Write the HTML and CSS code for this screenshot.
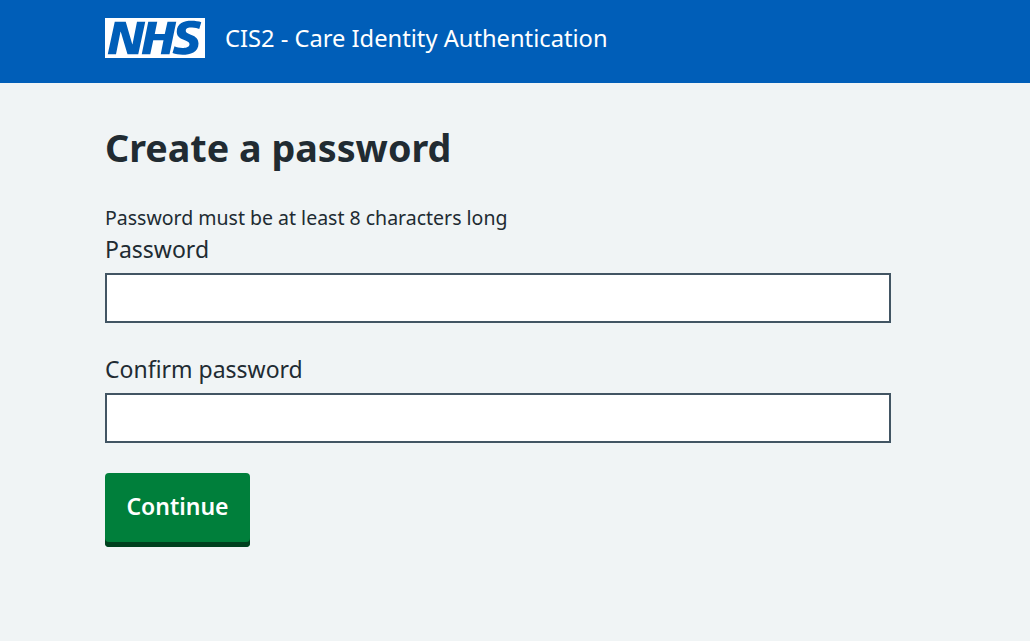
FILE: index.html
```html
<!DOCTYPE html>
<html lang="en">
<head>
  <meta charset="UTF-8">
  <title>Create a password</title>
  <link rel="stylesheet" href="styles.css">
</head>
<body>

  <header class="header">
    <svg class="logo" viewBox="0 0 40 16" aria-label="NHS">
      <path fill="#fff" d="M0 0h40v16H0z"/>
      <path fill="#005eb8" d="M3.900 1.500h4.400l2.600 9h.1l1.800-9h3.300l-2.800 13H9l-2.700-9h-.1l-1.800 9H1.100M17.300 1.500h3.600l-1 4.900h4L25 1.500h3.500l-2.700 13h-3.500l1.100-5.600h-4.100l-1.200 5.600h-3.400M37.700 4.400c-.7-.3-1.600-.6-2.900-.6-1.400 0-2.500.2-2.500 1.300 0 1.800 5.100 1.200 5.100 5.100 0 3.600-3.300 4.500-6.400 4.500-1.300 0-2.900-.3-4-.7l.8-2.700c.7.4 2.100.7 3.200.7s2.800-.2 2.800-1.500c0-2.100-5.100-1.300-5.100-5 0-3.400 2.900-4.400 5.800-4.400 1.600 0 3.100.2 4 .6"/>
    </svg>
    <span class="service-name">CIS2 - Care Identity Authentication</span>
  </header>

  <!-- Password form -->
  <main class="content">
    <h1>Create a password</h1>
    <p class="hint">Password must be at least 8 characters long</p>
    <form class="form">
      <div class="form-group">
        <label for="password">Password</label>
        <input type="password" id="password">
      </div>
      <div class="form-group">
        <label for="confirm-password">Confirm password</label>
        <input type="password" id="confirm-password">
      </div>
      <button type="button" class="btn">Continue</button>
    </form>
  </main>

</body>
</html>
```

FILE: styles.css
```css
body {
  margin: 0;
  font-family: "Noto Sans", Arial, sans-serif;
  background-color: #f0f4f5;
  color: #212b32;
}

.header {
  height: 83px;
  box-sizing: border-box;
  padding: 18px 105px 0;
  background-color: #005eb8;
  display: flex;
  align-items: flex-start;
}

.logo {
  width: 100px;
  height: 40px;
  flex-shrink: 0;
}

.service-name {
  margin-left: 20px;
  color: #fff;
  font-size: 23.7px;
  line-height: 40px;
}

.content {
  padding: 0 105px;
}

h1 {
  margin: 40px 0 0;
  font-size: 37.7px;
  line-height: 50px;
  font-weight: 700;
}

.hint {
  margin: 30px 0 0;
  font-size: 19.5px;
  line-height: 30px;
}

.form {
  width: 786px;
}

.form-group {
  margin-bottom: 30px;
}

label {
  display: block;
  font-size: 23px;
  line-height: 32px;
  margin-bottom: 8px;
}

input {
  display: block;
  width: 100%;
  height: 50px;
  box-sizing: border-box;
  border: 2px solid #425563;
  background-color: #fff;
  padding: 4px;
  font-size: 19px;
}

.btn {
  width: 145px;
  height: 74px;
  border: none;
  border-radius: 4px;
  background-color: #007f3b;
  box-shadow: inset 0 -5px 0 #00401e;
  color: #fff;
  font-family: inherit;
  font-size: 23px;
  font-weight: 600;
  padding: 0 0 9px;
  cursor: pointer;
}
```
